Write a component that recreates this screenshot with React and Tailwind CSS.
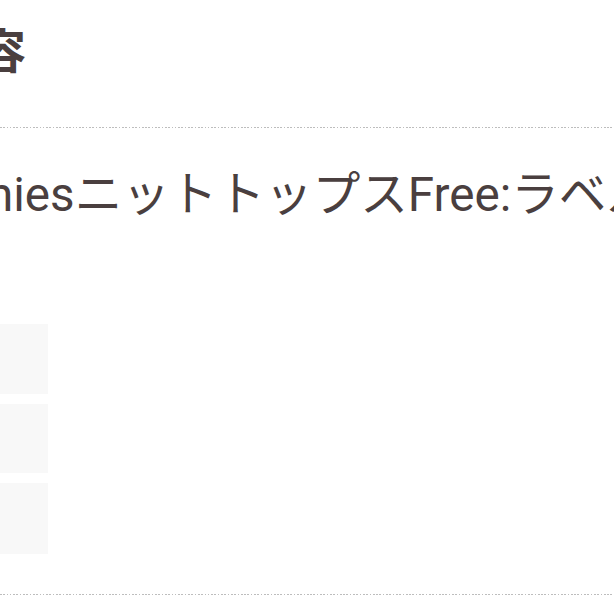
import React from 'react';

const Dotted = ({ className = '' }) => (
  <div
    className={`h-px w-full bg-[repeating-linear-gradient(90deg,#bdbdbd_0_1.6px,transparent_1.6px_3.3px)] ${className}`}
  />
);

const App = () => {
  return (
    <main
      className="w-[614px] h-[614px] overflow-hidden bg-white text-[#4a3f3f]"
      style={{ fontFamily: 'Roboto, "Noto Sans CJK JP", sans-serif' }}
    >
      {/* Section title */}
      <h2 className="pt-[28px] -ml-[68px] text-[47px] font-bold leading-none whitespace-nowrap">
        内容
      </h2>

      <Dotted className="mt-[52px]" />

      {/* Item description */}
      <p className="mt-[44px] -ml-[13px] text-[47.6px] leading-none whitespace-nowrap">
        niesニットトップスFree:ラベル
      </p>

      {/* Thumbnails */}
      <div className="mt-[104px] flex flex-col gap-[10px]">
        <div className="w-[48px] h-[70px] bg-[#f8f8f8]" />
        <div className="w-[48px] h-[69px] bg-[#f8f8f8]" />
        <div className="w-[48px] h-[71px] bg-[#f8f8f8]" />
      </div>

      <Dotted className="mt-[40px]" />
    </main>
  );
};

export default App;
